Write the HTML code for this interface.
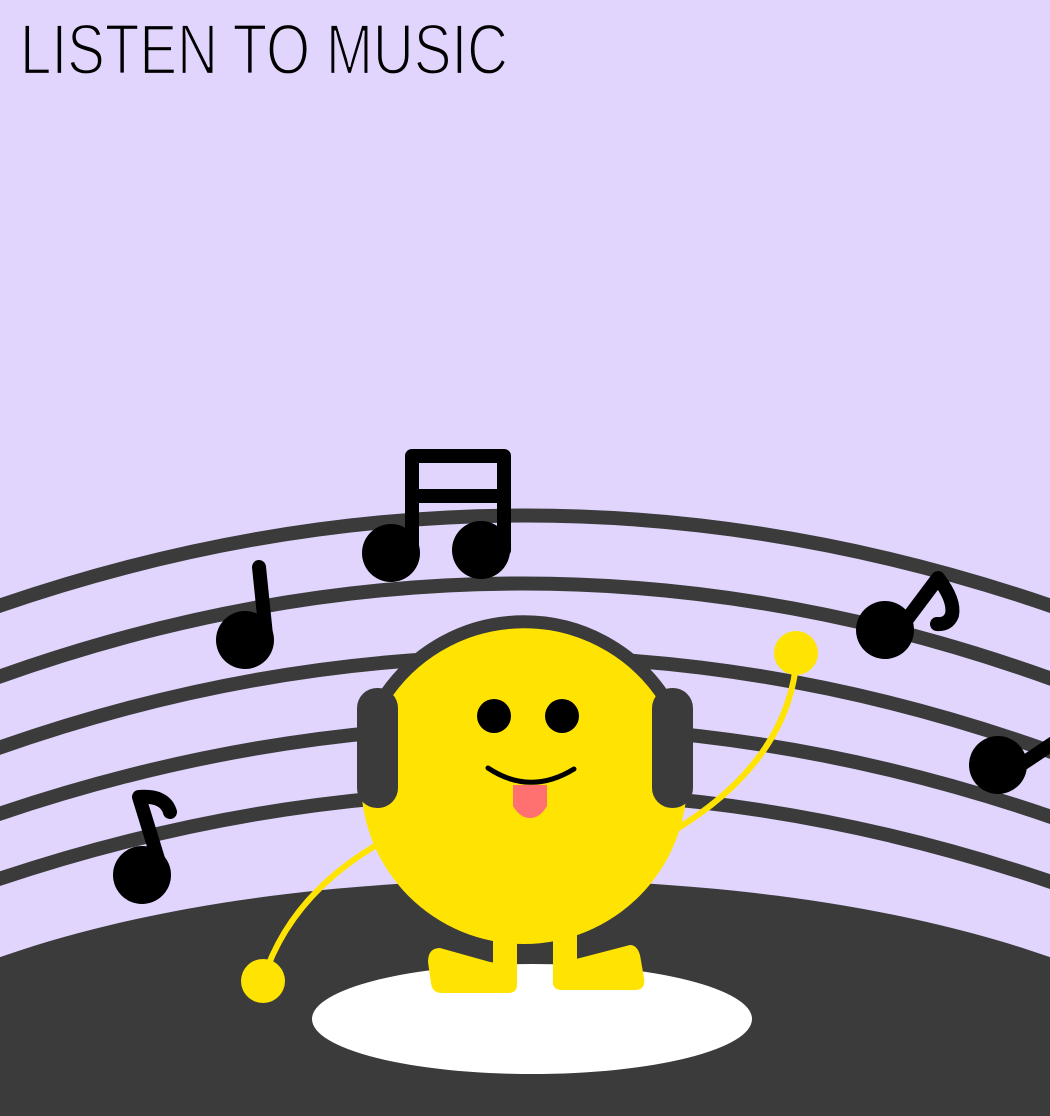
<!DOCTYPE html>
<html><head><meta charset="utf-8"><style>
html,body{margin:0;padding:0;background:#e1d5fd;overflow:hidden;width:1050px;height:1116px}
svg{display:block}
</style></head><body>
<svg width="1050" height="1116" viewBox="0 0 1050 1116" xmlns="http://www.w3.org/2000/svg">
<rect width="1050" height="1116" fill="#e1d5fd"/>
<text x="20" y="74" font-family="Liberation Sans, sans-serif" font-size="71" textLength="488" lengthAdjust="spacingAndGlyphs" fill="#000" stroke="#e1d5fd" stroke-width="2.2">LISTEN TO MUSIC</text>
<g fill="none" stroke="#3b3b3b" stroke-width="14">
<path d="M-10 609 Q525 422 1060 609"/>
<path d="M-10 680 Q525 486 1060 682"/>
<path d="M-10 751 Q525 560 1060 755"/>
<path d="M-10 817 Q525 633 1060 820"/>
<path d="M-10 882 Q525 700 1060 885"/>
</g>
<ellipse cx="525" cy="1150" rx="750" ry="270" fill="#3b3b3b"/>
<ellipse cx="532" cy="1019" rx="220" ry="55" fill="#fff"/>
<g fill="#000" stroke="#000" stroke-linecap="round" stroke-linejoin="round">
<circle cx="391" cy="553" r="29" stroke="none"/>
<circle cx="481" cy="550" r="29" stroke="none"/>
<path d="M412 550 V456 H504 V550" fill="none" stroke-width="14"/>
<path d="M412 496 H504" fill="none" stroke-width="14"/>
<circle cx="245" cy="640" r="29" stroke="none"/>
<path d="M259 567 L266 635" fill="none" stroke-width="14"/>
<circle cx="885" cy="630" r="29" stroke="none"/>
<path d="M905 622 L938 578 Q955 600 952 615 Q948 625 937 624" fill="none" stroke-width="14"/>
<circle cx="142" cy="875" r="29" stroke="none"/>
<path d="M163 875 L139 797 Q165 795 170 812" fill="none" stroke-width="14"/>
<circle cx="998" cy="765" r="29" stroke="none"/>
<path d="M1010 772 L1055 742" fill="none" stroke-width="14"/>
</g>
<g fill="none" stroke="#ffe403" stroke-width="6" stroke-linecap="round">
<path d="M380 843 Q290 895 263 980"/>
<path d="M675 830 Q790 760 797 655"/>
</g>
<circle cx="263" cy="981" r="22" fill="#ffe403"/>
<circle cx="796" cy="653" r="22" fill="#ffe403"/>
<rect x="493" y="920" width="24" height="65" fill="#ffe403"/>
<rect x="553" y="920" width="24" height="65" fill="#ffe403"/>
<path d="M440 948 L490 962 L510 965 Q517 966 517 975 V985 Q517 993 508 993 H442 Q432 993 431 983 L428 962 Q428 948 440 948Z" fill="#ffe403"/>
<path d="M630 945 L580 958 L562 962 Q553 963 553 972 V982 Q553 990 562 990 H635 Q646 990 644 978 L640 955 Q637 945 630 945Z" fill="#ffe403"/>
<circle cx="524" cy="781" r="163" fill="#ffe403"/>
<path d="M382 700 A168 168 0 0 1 666 700" fill="none" stroke="#3b3b3b" stroke-width="13"/>
<rect x="357" y="688" width="41" height="120" rx="20" fill="#3b3b3b"/>
<rect x="652" y="688" width="41" height="120" rx="20" fill="#3b3b3b"/>
<circle cx="494" cy="716" r="17" fill="#000"/>
<circle cx="562" cy="716" r="17" fill="#000"/>
<path d="M513 785 H547 V806 Q540 818 530 818 Q520 818 513 806Z" fill="#ff7070"/>
<path d="M488 768 Q530 796 574 769" fill="none" stroke="#000" stroke-width="5" stroke-linecap="round"/>
</svg>
</body></html>
